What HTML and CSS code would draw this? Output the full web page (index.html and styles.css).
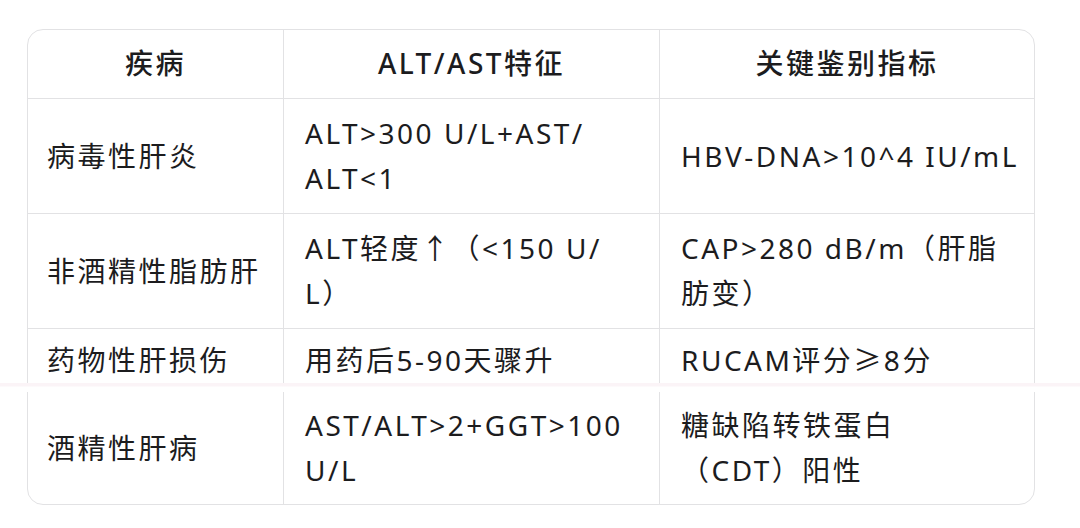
FILE: index.html
```html
<!DOCTYPE html>
<html lang="zh">
<head>
<meta charset="utf-8">
<link rel="stylesheet" href="styles.css">
</head>
<body>
<div class="page">
  <table class="grid">
    <colgroup>
      <col class="c1"><col class="c2"><col class="c3">
    </colgroup>
    <thead>
      <tr><th>疾病</th><th>ALT/AST特征</th><th>关键鉴别指标</th></tr>
    </thead>
    <tbody>
      <tr><td>病毒性肝炎</td><td>ALT&gt;300 U/L+AST/<br>ALT&lt;1</td><td>HBV-DNA&gt;10^4 IU/mL</td></tr>
      <tr><td>非酒精性脂肪肝</td><td>ALT轻度↑（&lt;150 U/<br>L）</td><td>CAP&gt;280 dB/m（肝脂<br>肪变）</td></tr>
      <tr class="cut"><td>药物性肝损伤</td><td>用药后5-90天骤升</td><td>RUCAM评分≥8分</td></tr>
      <tr class="last"><td>酒精性肝病</td><td>AST/ALT&gt;2+GGT&gt;100<br>U/L</td><td>糖缺陷转铁蛋白<br>（CDT）阳性</td></tr>
    </tbody>
  </table>
  <div class="seam"></div>
</div>
</body>
</html>
```

FILE: styles.css
```css
html, body {
  margin: 0;
  padding: 0;
  background: #ffffff;
}
body {
  font-family: "Noto Sans", "Noto Sans CJK SC", sans-serif;
  color: #1c1c1e;
}
.page {
  position: relative;
  width: 1080px;
  height: 528px;
  padding: 29px 0 0 27px;
  box-sizing: border-box;
}
.grid {
  width: 1006px;
  table-layout: fixed;
  border-collapse: separate;
  border-spacing: 0;
  border: 1px solid #e2e2e4;
  border-radius: 16px;
  font-size: 28px;
  line-height: 45px;
  letter-spacing: 2.5px;
}
.c1 { width: 256px; }
.c2 { width: 376px; }
.c3 { width: 374px; }
.grid th,
.grid td {
  padding: 12px 6px 12px 21px;
  border-right: 1px solid #e2e2e4;
  border-bottom: 1px solid #e2e2e4;
  text-align: left;
  vertical-align: middle;
}
.grid th {
  text-align: center;
  font-weight: 500;
  padding: 11px 6px 12px 6px;
}
.grid td:first-child { padding-left: 19px; }
.grid th:last-child,
.grid td:last-child { border-right: none; }
.grid tr.cut td {
  padding-top: 9px;
  padding-bottom: 9px;
  border-bottom: none;
}
.grid tr.last td {
  border-bottom: none;
  padding-top: 11px;
  padding-bottom: 11px;
}
.seam {
  position: absolute;
  left: 0;
  right: 0;
  top: 383px;
  height: 9px;
  background: linear-gradient(#fbf4f7 0, #fbf4f7 3px, #ffffff 4px, #ffffff 100%);
}
```
